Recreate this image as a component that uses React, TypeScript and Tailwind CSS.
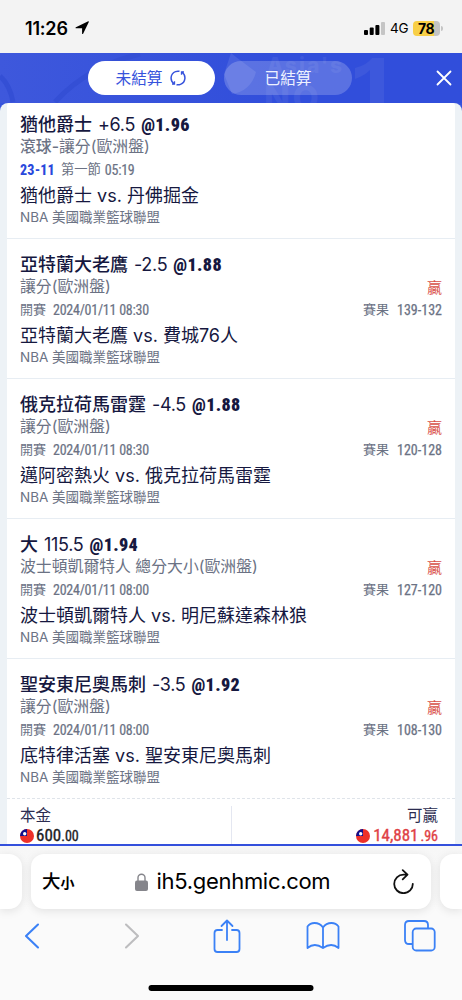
import type { ReactNode } from "react";

type Bet = {
  pick: string;
  line: string;
  odds: string;
  live?: boolean;
  market: string;
  time: string;
  teams: string;
  score?: string;
};

const bets: Bet[] = [
  { pick: "猶他爵士", line: "+6.5", odds: "@1.96", live: true, market: "讓分(歐洲盤)", time: "05:19", teams: "猶他爵士 vs. 丹佛掘金" },
  { pick: "亞特蘭大老鷹", line: "-2.5", odds: "@1.88", market: "讓分(歐洲盤)", time: "2024/01/11 08:30", teams: "亞特蘭大老鷹 vs. 費城76人", score: "139-132" },
  { pick: "俄克拉荷馬雷霆", line: "-4.5", odds: "@1.88", market: "讓分(歐洲盤)", time: "2024/01/11 08:30", teams: "邁阿密熱火 vs. 俄克拉荷馬雷霆", score: "120-128" },
  { pick: "大", line: "115.5", odds: "@1.94", market: "波士頓凱爾特人 總分大小(歐洲盤)", time: "2024/01/11 08:00", teams: "波士頓凱爾特人 vs. 明尼蘇達森林狼", score: "127-120" },
  { pick: "聖安東尼奧馬刺", line: "-3.5", odds: "@1.92", market: "讓分(歐洲盤)", time: "2024/01/11 08:00", teams: "底特律活塞 vs. 聖安東尼奧馬刺", score: "108-130" },
];

function Num({ children, className = "" }: { children: ReactNode; className?: string }) {
  return <span className={`font-['Roboto','Noto_Sans_CJK_TC',sans-serif] [font-stretch:75%] ${className}`}>{children}</span>;
}

function Flag() {
  return (
    <svg width="14" height="14" viewBox="0 0 14 14" className="shrink-0">
      <circle cx="7" cy="7" r="7" fill="#ed3028" />
      <path d="M7 0A7 7 0 0 0 0 7h7z" fill="#10108c" />
      <circle cx="4.7" cy="4.7" r="1.7" fill="#fff" />
    </svg>
  );
}

function StatusBar() {
  return (
    <div className="flex h-[53px] shrink-0 items-center bg-[#f3f3f3] pl-[25px] pr-[19px] pt-[3px] text-black">
      <span className="w-[46px] whitespace-nowrap text-[18px] font-semibold tracking-[-0.2px]">11:26</span>
      <svg width="14" height="14" viewBox="0 0 15 15" className="ml-[4px]">
        <path d="M14.2.4c.4-.2.8.2.6.7L8.7 13.7c-.3.6-1.1.4-1.1-.3V7.800H1.300c-.8 0-1-.9-.3-1.200z" />
      </svg>
      <div className="ml-auto flex items-center">
        <svg width="21" height="13" viewBox="0 0 21 13">
          <rect y="8" width="4" height="5" rx="1" />
          <rect x="5.7" y="5.5" width="4" height="7.5" rx="1" />
          <rect x="11.4" y="3" width="4" height="10" rx="1" />
          <rect x="17" y="0" width="4" height="13" rx="1" fill="#c5c5c5" />
        </svg>
        <span className="ml-[5px] w-[18px] text-[13.5px] tracking-[-0.2px]">4G</span>
        <span className="ml-[5px] flex h-[15px] w-[27px] items-center justify-center rounded-[4px] bg-linear-to-r from-[#f8cf47] from-78% to-[#c4c4c4] to-78% pr-px text-[14px] font-bold tracking-[-0.6px]">78</span>
        <span className="ml-px h-[5px] w-[2px] rounded-r bg-[#c4c4c4]" />
      </div>
    </div>
  );
}

function Header() {
  return (
    <div className="relative h-[50px] shrink-0 overflow-hidden bg-linear-to-r from-[#3e58dc] to-[#314edb] to-60%">
      <svg className="absolute inset-0" width="462" height="50" viewBox="0 0 462 50">
        <path d="M0 23Q10 32 13 49M55 49Q88 13 140 1" fill="none" stroke="#344fd5" strokeWidth="5" />
        <path d="M231 0l5 4 20 15q-5 19-24 22l-8-20z" fill="#4660df" />
        <g fill="#3d58dc" fontFamily="Inter, sans-serif" fontWeight="800">
          <text x="267" y="20" fontSize="21" textLength="75">Asia's</text>
          <text x="264" y="57" fontSize="34" textLength="68">NO.</text>
        </g>
        <path d="M384 5v45h-14V17q-6 6-15 9V15q12-3 17-10z" fill="#3d58dc" />
      </svg>
      <div className="relative flex h-full items-center gap-[9px] pl-[88px] pr-[10px]">
        <button className="flex h-[34px] w-[127px] items-center justify-center gap-[7px] rounded-full bg-white pr-[2px] pt-px text-[15.7px] text-[#3753dc]">
          未結算
          <svg width="16" height="16" viewBox="0 0 16 16" className="-mt-px" fill="none" stroke="#3753dc" strokeWidth="1.5">
            <path d="M4.200 13.800A6.900 6.900 0 0 1 5.500 1.600M11.800 2.200A6.900 6.900 0 0 1 10.500 14.400M5.500 1.600A6.900 6.900 0 0 1 9.500 1.300M10.500 14.400A6.900 6.900 0 0 1 6.500 14.700" />
            <path d="M11.500 4.800V2H14M4.500 11.200V14H2" strokeWidth="1.3" />
          </svg>
        </button>
        <button className="flex h-[34px] w-[128px] items-center justify-center rounded-full bg-white/20 pt-px text-[15.7px] text-[#eef1ff]">已結算</button>
        <svg width="16" height="16" viewBox="0 0 16 16" className="ml-auto" fill="none" stroke="white" strokeWidth="1.8" strokeLinecap="round">
          <path d="M1.5 1.5l13 13M14.5 1.5l-13 13" />
        </svg>
      </div>
    </div>
  );
}

function BetCard({ bet }: { bet: Bet }) {
  const last = bet === bets[bets.length - 1];
  return (
    <div className={`shrink-0 whitespace-nowrap px-[13px] pt-[13px] ${bet.live ? "-mt-[4px]" : ""} ${last ? "h-[139px]" : "h-[140px] border-b border-[#e7edf3]"}`}>
      <div className="flex h-[24px] items-center text-[18px] text-[#16183f]">
        <span className="font-medium">{bet.pick}</span>
        <span className="ml-[6px] tracking-[-0.3px]">{bet.line}</span>
        <Num className="ml-[6px] text-[18px] font-black tracking-[0.35px]">{bet.odds}</Num>
      </div>
      <div className="flex h-[21px] items-center justify-between text-[15.85px] text-[#6b7284]">
        <span>{bet.live && <b className="font-medium">滾球-</b>}{bet.market}</span>
        {bet.score && <span className="pt-[4px] text-[15px] text-[#d9514a]">贏</span>}
      </div>
      <div className="flex h-[26px] items-center text-[13px] text-[#6b7284]">
        {bet.live ? (
          <>
            <Num className="mr-[6px] text-[14px] font-extrabold tracking-[0.2px] text-[#2948dc]">23-11</Num>
            <span className="mr-[4px] text-[13.3px]">第一節</span>
            <Num className="text-[14px] tracking-[-0.25px] [-webkit-text-stroke:0.2px]">{bet.time}</Num>
          </>
        ) : (
          <>
            <span className="mr-[7px]">開賽</span>
            <Num className="text-[14px] tracking-[-0.25px] [-webkit-text-stroke:0.2px]">{bet.time}</Num>
            <span className="ml-auto mr-[8px]">賽果</span>
            <Num className="text-[14px] [-webkit-text-stroke:0.25px]">{bet.score}</Num>
          </>
        )}
      </div>
      <div className="flex h-[24px] items-center text-[18px] text-[#16183f]">{bet.teams}</div>
      <div className="flex h-[20px] items-center text-[13.5px] text-[#6b7284]">NBA 美國職業籃球聯盟</div>
    </div>
  );
}

function Totals() {
  return (
    <div className="flex h-[46px] shrink-0 border-t border-dashed border-[#dfe4ea] text-[15.5px] text-[#2b2c50]">
      <div className="mt-[7px] w-[225px] border-r border-[#e4e7f1] pl-[13px]">
        <div className="flex h-[20px] items-center">本金</div>
        <div className="flex h-[19px] items-center text-[#1b1b22]">
          <Flag />
          <Num className="ml-[2px] text-[17px] [-webkit-text-stroke:0.35px]">600<span className="text-[14px]">.00</span></Num>
        </div>
      </div>
      <div className="mt-[7px] flex flex-1 flex-col items-end pr-[17px]">
        <div className="flex h-[20px] items-center">可贏</div>
        <div className="flex h-[19px] items-center text-[#df4145]">
          <Flag />
          <Num className="ml-[3px] text-[17px] [-webkit-text-stroke:0.35px]">14,881<span className="ml-[2px] text-[14px]">.96</span></Num>
        </div>
      </div>
    </div>
  );
}

function BrowserControls() {
  return (
    <div className="flex h-[154px] shrink-0 flex-col bg-[#fafafa]">
      <div className="flex h-[63px] gap-[9px] bg-linear-to-b from-[#f7f7f7] to-[#fafafa] pt-[8px]">
        <div className="h-[55px] w-[22px] shrink-0 rounded-r-[13px] bg-white shadow-[0_2px_10px_rgba(0,0,0,0.1)]" />
        <div className="flex h-[55px] w-[400px] shrink-0 items-center rounded-[13px] bg-white pl-[11px] pr-[17px] text-black shadow-[0_2px_10px_rgba(0,0,0,0.1)]">
          <span className="text-[18.5px] font-medium">大<span className="text-[14px] font-bold">小</span></span>
          <svg width="13" height="18" viewBox="0 0 13 18" className="ml-[60px]">
            <path d="M3 8V4.8a3.5 3.5 0 0 1 7 0V8" fill="none" stroke="#85858b" strokeWidth="1.4" />
            <rect y="7.5" width="13" height="10.5" rx="2" fill="#85858b" />
          </svg>
          <span className="ml-[9px] text-[22px] tracking-[-0.3px]">ih5.genhmic.com</span>
          <svg width="21" height="25" viewBox="0 0 21 25" className="ml-auto" fill="none" stroke="#111" strokeWidth="1.8" strokeLinecap="round" strokeLinejoin="round">
            <path d="M14.2 5.6H10.5A9.3 9.3 0 1 0 19.8 14.8M9.7 1.1l4.8 4.5-4.8 4.7" />
          </svg>
        </div>
        <div className="h-[55px] w-[22px] shrink-0 rounded-l-[13px] bg-white shadow-[0_2px_10px_rgba(0,0,0,0.1)]" />
      </div>
      <div className="flex h-[54px] items-center pl-[24px] text-[#3b81f6]">
        <svg width="16" height="26" viewBox="0 0 16 26" fill="none" stroke="currentColor" strokeWidth="2.1" strokeLinecap="round" strokeLinejoin="round">
          <path d="M14 1.5L2 13l12 11.5" />
        </svg>
        <svg width="16" height="26" viewBox="0 0 16 26" className="ml-[84px]" fill="none" stroke="#bdbdbf" strokeWidth="2.1" strokeLinecap="round" strokeLinejoin="round">
          <path d="M2 1.5L14 13 2 24.5" />
        </svg>
        <svg width="28" height="34" viewBox="0 0 28 34" className="ml-[73px]" fill="none" stroke="currentColor" strokeWidth="1.8" strokeLinecap="round" strokeLinejoin="round">
          <path d="M9 11H4.5Q1.5 11 1.5 14v16q0 3 3 3h19q3 0 3-3V14q0-3-3-3H19M14 21V1.5M8.5 7L14 1.5 19.5 7" />
        </svg>
        <svg width="34" height="30" viewBox="0 0 34 30" className="ml-[65px]" fill="none" stroke="currentColor" strokeWidth="1.8" strokeLinejoin="round">
          <path d="M17 6.5Q14 2 8.5 2 4 2 1.5 5.5V27q7-6 15.5 0 8.5-6 15.5 0V5.5Q30 2 25.5 2 20 2 17 6.5zV27" />
        </svg>
        <svg width="32" height="32" viewBox="0 0 32 32" className="ml-[64px]" fill="none" stroke="currentColor" strokeWidth="1.8" strokeLinejoin="round">
          <rect x="8.7" y="8.5" width="22" height="22" rx="3.5" />
          <path d="M8.5 24H5q-4 0-4-4V5q0-4 4-4h15q4 0 4 4v3.5" />
        </svg>
      </div>
      <div className="mx-auto mt-[22px] h-[6px] w-[165px] -translate-x-[0.5px] rounded-full bg-black" />
    </div>
  );
}

export default function App() {
  return (
    <main className="flex h-[1000px] w-[462px] flex-col overflow-hidden bg-[#f3f3f3] font-['Inter','Noto_Sans_CJK_TC',sans-serif]">
      <StatusBar />
      <Header />
      <div className="h-[741px] shrink-0 bg-[#3653dc]">
        <div className="h-full overflow-hidden rounded-t-[8px] bg-[#edf2f6] px-[7px]">
          <div className="flex h-full flex-col rounded-t-[3px] bg-white">
            {bets.map((bet) => <BetCard key={bet.pick} bet={bet} />)}
            <Totals />
          </div>
        </div>
      </div>
      <div className="h-[2px] shrink-0 bg-[#3450dc]" />
      <BrowserControls />
    </main>
  );
}
